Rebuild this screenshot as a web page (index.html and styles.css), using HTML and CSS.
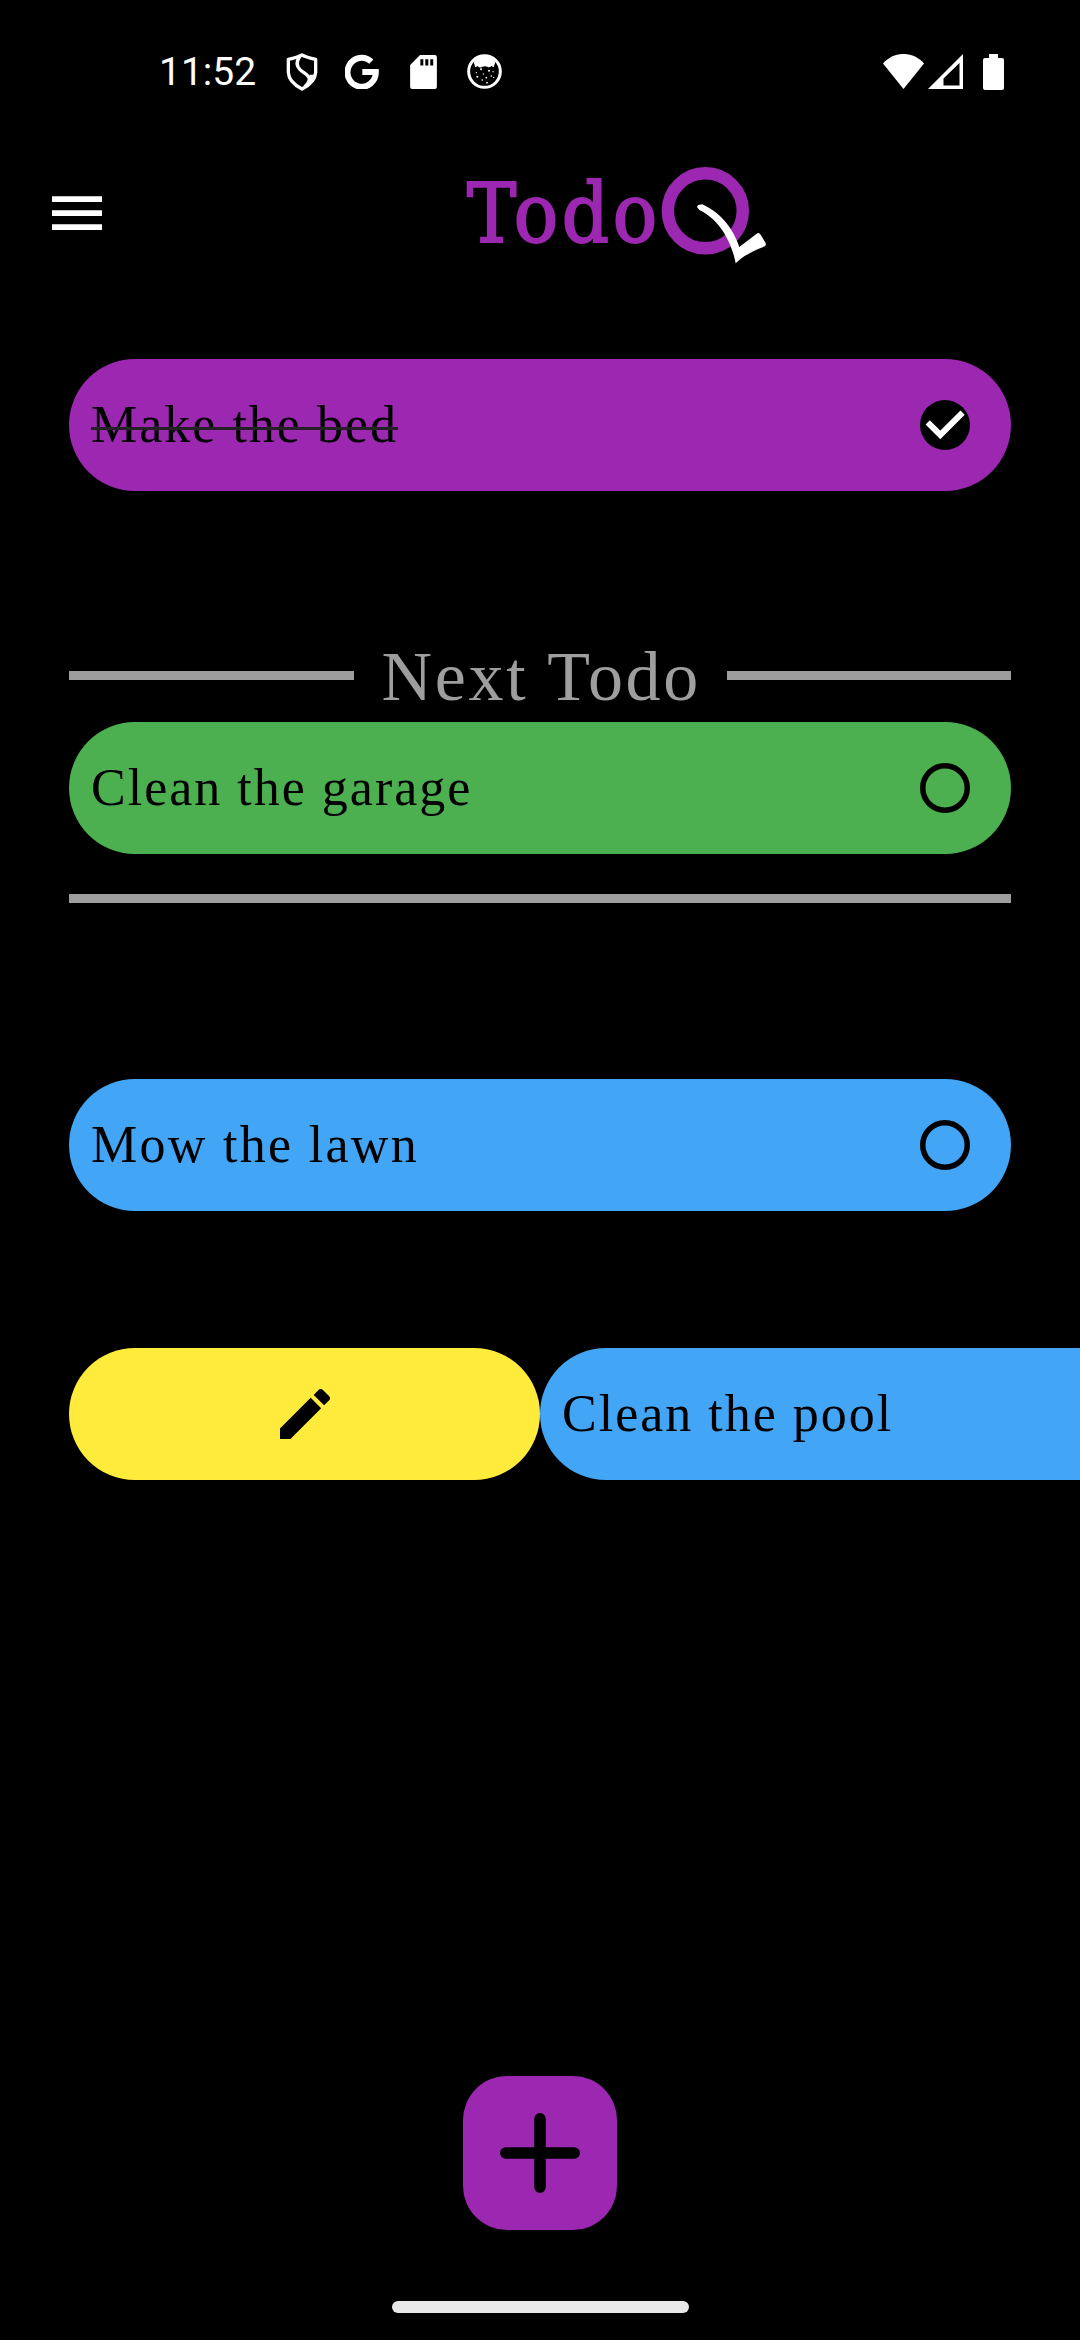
FILE: index.html
```html
<!DOCTYPE html>
<html lang="en">
<head>
<meta charset="utf-8">
<title>TodoQ</title>
<link rel="stylesheet" href="styles.css">
</head>
<body>
<div class="screen">
  <div class="status">
    <span class="clock">11:52</span>
    <svg class="s-shield" viewBox="0 0 96 114"><g fill="none" stroke="#fff" stroke-width="10" stroke-linejoin="round"><path d="M48 6C37 12 21 16 7 19V58C8 79 27 97 48 108C69 97 88 79 89 58V19C75 16 59 12 48 6Z"/><path d="M42 10C30 26 32 40 42 50C53 61 69 65 70 78C70 87 64 94 56 101"/></g><path fill="#fff" d="M70 65L86 65C80 84 67 98 50 107C62 94 76 82 70 65Z"/></svg>
    <svg class="s-google" viewBox="0 0 102 105"><path fill="none" stroke="#fff" stroke-width="18" d="M79 23A42.500 43.500 0 1 0 92.500 54H52"/></svg>
    <svg class="s-card" viewBox="0 0 81 103"><path fill="#fff" fill-rule="evenodd" d="M30 0H75Q81 0 81 6V97Q81 103 75 103H6Q0 103 0 97V30ZM31 13V32H40V13ZM46 13V32H55V13ZM61 13V32H70V13Z"/></svg>
    <svg class="s-cat" viewBox="0 0 105 105"><circle cx="52.500" cy="52.500" r="47.500" fill="none" stroke="#fff" stroke-width="9"/><path fill="#fff" d="M20 24C34 2 71 2 85 24L80 40L73 36Q68 42 61 38Q52 35 43 40Q36 42 32 36L25 40Z"/><g fill="#fff"><circle cx="42" cy="46" r="3"/><circle cx="66" cy="50" r="3"/><circle cx="28" cy="56" r="2"/><circle cx="31" cy="68" r="3"/><circle cx="49" cy="60" r="2"/><circle cx="78" cy="53" r="2"/><circle cx="58" cy="71" r="2.500"/><circle cx="73" cy="66" r="2.500"/><circle cx="46" cy="78" r="2.500"/><circle cx="60" cy="86" r="2.500"/><circle cx="80" cy="70" r="2"/></g></svg>
    <svg class="s-wifi" viewBox="0 0 41 35"><path fill="#fff" d="M0 9.500C11-3.200 30-3.200 41 9.500L20.500 35Z"/></svg>
    <svg class="s-signal" viewBox="0 0 35 35"><path fill="#fff" fill-rule="evenodd" d="M35 0V35H0ZM31.500 9L15.500 24.500V31.500H31.500Z"/></svg>
    <svg class="s-battery" viewBox="0 0 21 36"><path fill="#fff" d="M6 0H15V4H19Q21 4 21 6V34Q21 36 19 36H2Q0 36 0 34V6Q0 4 2 4H6Z"/></svg>
  </div>

  <header class="appbar">
    <svg class="menu" viewBox="0 0 50 34"><path fill="#fff" d="M0 .2H50V6H0ZM0 14.200H50V20H0ZM0 28.200H50V34H0Z"/></svg>
    <div class="brand">
      <span class="brand-text">Todo</span>
      <svg class="brand-q" viewBox="663 50 318 295"><circle cx="796" cy="184.500" r="112.500" fill="none" stroke="#9c27b0" stroke-width="37.500"/><path fill="#fff" d="M771 173L774 167L787 165C842 190 880 238 898 293L952 252Q956 250 961 255L977 281Q979 287 975 291C940 304 910 319 887 342C875 275 835 208 778 182Z"/></svg>
    </div>
  </header>

  <main class="list">
    <div class="todo purple">
      <span class="label done">Make the bed</span>
      <svg class="mark" viewBox="0 0 50 50"><circle cx="25" cy="25" r="25"/><path fill="none" stroke="#fff" stroke-width="6" d="M7.700 22.300L20.300 34.900L42.600 12.600"/></svg>
    </div>

    <section class="next">
      <div class="next-head"><span class="rule"></span><h2 class="next-title">Next Todo</h2><span class="rule"></span></div>
      <div class="todo green">
        <span class="label">Clean the garage</span>
        <svg class="mark" viewBox="0 0 50 50"><circle cx="25" cy="25" r="22.250" fill="none" stroke="#000" stroke-width="5.500"/></svg>
      </div>
      <div class="rule base"></div>
    </section>

    <div class="todo blue">
      <span class="label airy">Mow the lawn</span>
      <svg class="mark" viewBox="0 0 50 50"><circle cx="25" cy="25" r="22.250" fill="none" stroke="#000" stroke-width="5.500"/></svg>
    </div>

    <div class="swipe">
      <div class="edit">
        <svg class="pencil" viewBox="3 3 18 18"><path d="M3 17.250V21h3.750L17.810 9.940l-3.750-3.750L3 17.250zM20.710 7.040c.39-.39.39-1.020 0-1.410l-2.340-2.340c-.39-.39-1.020-.39-1.410 0l-1.830 1.830 3.750 3.750 1.830-1.830z"/></svg>
      </div>
      <div class="todo blue slid"><span class="label">Clean the pool</span></div>
    </div>
  </main>

  <footer class="bottom">
    <div class="add"><svg class="plus" viewBox="0 0 80 80"><path fill="none" stroke="#000" stroke-width="11.500" stroke-linecap="round" d="M40 5.750V74.250M5.750 40H74.250"/></svg></div>
    <div class="handle"></div>
  </footer>
</div>
</body>
</html>
```
FILE: styles.css
```css
* { box-sizing: border-box; margin: 0; padding: 0; }
body { background: #000; }
svg { display: block; flex: none; }

.screen {
  width: 1080px;
  height: 2340px;
  overflow: hidden;
  display: flex;
  flex-direction: column;
  background: #000;
  font-family: "Liberation Serif", serif;
}

.status {
  height: 143px;
  padding-left: 159px;
  display: flex;
  align-items: center;
}
.clock {
  width: 127px;
  font: 39px/46px Roboto, sans-serif;
  color: #fff;
  white-space: nowrap;
}
.s-shield { width: 32px; height: 38px; }
.s-google { width: 34px; height: 35px; margin-left: 27px; }
.s-card { width: 27px; height: 34px; margin-left: 31px; }
.s-cat { width: 35px; height: 35px; margin-left: 30px; }
.s-wifi { width: 41px; height: 35px; margin-left: 381px; }
.s-signal { width: 35px; height: 35px; margin-left: 4px; }
.s-battery { width: 21px; height: 36px; margin-left: 20px; }

.appbar {
  height: 139px;
  padding-left: 52px;
  display: flex;
  align-items: center;
}
.menu { width: 50px; height: 34px; }
.brand {
  margin-left: 365px;
  display: flex;
  align-items: center;
}
.brand-text {
  width: 194px;
  padding-top: 4px;
  font-family: "DejaVu Serif Condensed", "DejaVu Serif", serif;
  font-stretch: condensed;
  font-size: 82px;
  line-height: 96px;
  letter-spacing: 3.800px;
  color: #9c27b0;
  -webkit-text-stroke: 2px #9c27b0;
  white-space: nowrap;
}
.brand-q { width: 106px; height: 98.300px; margin-top: 6px; }

.list {
  padding: 76.500px 69px 0;
  display: flex;
  flex-direction: column;
}
.todo {
  height: 132px;
  border-radius: 66px;
  padding: 0 41px 0 22px;
  display: flex;
  align-items: center;
  justify-content: space-between;
}
.purple { background: #9c27b0; }
.green { background: #4caf50; }
.blue { background: #42a5f5; }
.label {
  font-size: 52px;
  line-height: 60px;
  letter-spacing: 2px;
  color: #000;
  white-space: nowrap;
}
.airy { letter-spacing: 2.300px; }
.done { position: relative; }
.done::after {
  content: "";
  position: absolute;
  left: 0;
  right: 0;
  top: 32px;
  height: 3px;
  background: #252025;
}
.mark { width: 50px; height: 50px; }

.next { margin: 141.500px 0 176.500px; }
.next-head {
  height: 90px;
  display: flex;
  align-items: center;
  gap: 28px;
}
.rule { flex: 1; height: 8.500px; background: #9e9e9e; }
.next-head .rule { margin-bottom: 3px; }
.base { margin-top: 40px; }
.next-title {
  width: 317px;
  font-size: 70px;
  line-height: 80px;
  font-weight: 400;
  letter-spacing: 2.700px;
  color: #9e9e9e;
  white-space: nowrap;
}

.swipe { margin-top: 137px; display: flex; }
.edit {
  flex: none;
  width: 471px;
  height: 132px;
  border-radius: 66px;
  background: #ffeb3b;
  display: flex;
  align-items: center;
  justify-content: center;
}
.pencil { width: 50px; height: 50px; }
.slid { flex: none; width: 942px; }

.bottom {
  margin-top: auto;
  height: 264px;
  display: flex;
  flex-direction: column;
  align-items: center;
}
.add {
  width: 154px;
  height: 154px;
  border-radius: 44px;
  background: #9c27b0;
  display: flex;
  align-items: center;
  justify-content: center;
}
.plus { width: 80px; height: 80px; }
.handle {
  width: 297px;
  height: 11.500px;
  margin-top: 71px;
  border-radius: 6px;
  background: #e9e9e9;
}
```
